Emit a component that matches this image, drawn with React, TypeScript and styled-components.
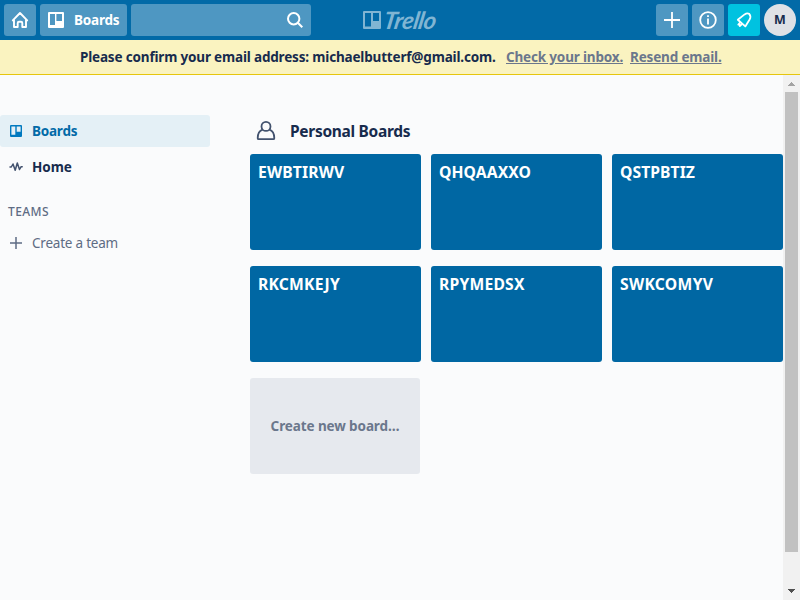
import React from "react";
import styled, { createGlobalStyle } from "styled-components";

const GlobalStyle = createGlobalStyle`
  *, *::before, *::after { box-sizing: border-box; }
  body { margin: 0; font-family: "Noto Sans", "Open Sans", sans-serif; font-size: 13.5px; line-height: 20px; color: #172b4d; background: #fafbfc; overflow: hidden; }
  button { font: inherit; border: 0; padding: 0; }
  svg { display: block; flex: none; }
`;

const Page = styled.div`
  display: flex;
  flex-direction: column;
  width: 800px;
  height: 600px;
  overflow: hidden;
`;

const Header = styled.header`
  display: grid;
  grid-template-columns: 1fr auto 1fr;
  align-items: center;
  height: 40px;
  flex: none;
  padding: 0 4px;
  background: #026aa7;
`;

const HeaderGroup = styled.div<{ $end?: boolean }>`
  display: flex;
  gap: 4px;
  justify-content: ${(p) => (p.$end ? "flex-end" : "flex-start")};
`;

const HeaderButton = styled.button<{ $accent?: boolean }>`
  display: flex;
  align-items: center;
  justify-content: center;
  width: 32px;
  height: 32px;
  border-radius: 3px;
  color: #fff;
  background: ${(p) => (p.$accent ? "#00c2e0" : "#4e97c2")};
`;

const BoardsButton = styled(HeaderButton)`
  width: 87px;
  justify-content: flex-start;
  padding-left: 8px;
  gap: 10px;
  font-weight: 700;
  letter-spacing: -0.2px;
`;

const SearchBox = styled.div`
  display: flex;
  align-items: center;
  justify-content: flex-end;
  width: 180px;
  height: 32px;
  padding-right: 7px;
  border-radius: 3px;
  background: #4e97c2;
`;

const Avatar = styled.div`
  display: flex;
  align-items: center;
  justify-content: center;
  width: 32px;
  height: 32px;
  border-radius: 50%;
  background: #dfe1e6;
  font-size: 12.5px;
  font-weight: 700;
`;

const Logo = styled.div`
  display: flex;
  align-items: center;
  gap: 3px;
  width: 74px;
  color: #80b5d3;
`;

const Wordmark = styled.span`
  font: italic 700 24px/24px Lato, sans-serif;
  letter-spacing: -0.5px;
  transform: skewX(-10deg);
`;

const Banner = styled.div`
  display: flex;
  justify-content: center;
  height: 35px;
  flex: none;
  padding-top: 7px;
  border-bottom: 1px solid #e6c60d;
  background: #faf3c0;
  font-weight: 700;
  letter-spacing: -0.17px;
  white-space: nowrap;
`;

const Message = styled.span`
  width: 426px;
`;

const BannerLink = styled.a<{ $width: number }>`
  width: ${(p) => p.$width}px;
  color: #6b778c;
  text-decoration: underline;
`;

const Body = styled.div`
  display: flex;
  flex: 1;
  min-height: 0;
`;

const Sidebar = styled.nav`
  width: 210px;
  flex: none;
  padding-top: 40px;
`;

const NavItem = styled.div<{ $active?: boolean; $light?: boolean }>`
  display: flex;
  align-items: center;
  gap: 8px;
  height: 32px;
  margin-bottom: 4px;
  padding-left: 8px;
  border-radius: 3px;
  font-weight: ${(p) => (p.$light ? 400 : 700)};
  letter-spacing: ${(p) => (p.$active || p.$light ? -0.22 : -0.05)}px;
  color: ${(p) => (p.$active ? "#026aa7" : p.$light ? "#5e6c84" : "#172b4d")};
  background: ${(p) => (p.$active ? "#e4f0f6" : "transparent")};
`;

const SectionLabel = styled.div`
  height: 28px;
  margin-top: 16px;
  padding: 3px 8px 0;
  font-size: 12px;
  font-weight: 500;
  letter-spacing: 0.4px;
  color: #5e6c84;
`;

const Main = styled.main`
  width: 533px;
  flex: none;
  margin-left: 40px;
  padding-top: 40px;
`;

const Heading = styled.h3`
  display: flex;
  align-items: center;
  gap: 8px;
  height: 32px;
  margin: 0 0 7px;
  font-size: 15.5px;
  font-weight: 700;
  letter-spacing: -0.3px;
`;

const Grid = styled.div`
  display: grid;
  grid-template-columns: repeat(3, 171px);
  gap: 16px 10px;
`;

const Tile = styled.div`
  height: 96px;
  padding: 8px;
  border-radius: 3px;
  background: #0067a3;
  color: #fff;
  font-size: 15.7px;
  font-weight: 700;
`;

const TileName = styled.span<{ $spacing: number }>`
  letter-spacing: ${(p) => p.$spacing}px;
`;

const NewTile = styled(Tile)`
  display: flex;
  align-items: center;
  justify-content: center;
  width: 170px;
  font-size: 13.5px;
  letter-spacing: -0.1px;
  color: #6b778c;
  background: #e6e9ee;
`;

const Scrollbar = styled.div`
  display: flex;
  flex-direction: column;
  align-items: center;
  width: 17px;
  background: #f1f1f1;
`;

const ScrollArrow = styled.div<{ $down?: boolean }>`
  display: flex;
  align-items: center;
  justify-content: center;
  width: 17px;
  height: 17px;
  margin-top: ${(p) => (p.$down ? "auto" : 0)};
  padding-bottom: ${(p) => (p.$down ? 1 : 0)}px;
  color: ${(p) => (p.$down ? "#505050" : "#a3a3a3")};
`;

const Thumb = styled.div`
  width: 13px;
  height: 460px;
  background: #c1c1c1;
`;

const BoardIcon = () => (
  <svg width="16" height="16" viewBox="0 0 16 16">
    <path fill="currentColor" fillRule="evenodd" d="M1 0h14a1 1 0 0 1 1 1v14a1 1 0 0 1-1 1H1a1 1 0 0 1-1-1V1a1 1 0 0 1 1-1ZM2 2v11h5V2Zm6.400 0v7H14V2Z" />
  </svg>
);

const LogoIcon = () => (
  <svg width="18" height="18" viewBox="0 0 18 18">
    <path fill="currentColor" fillRule="evenodd" d="M1 0h16a1 1 0 0 1 1 1v16a1 1 0 0 1-1 1H1a1 1 0 0 1-1-1V1a1 1 0 0 1 1-1ZM2 2v13.500h6V2Zm8 0v8h6V2Z" />
  </svg>
);

const HomeIcon = () => (
  <svg width="18" height="18" viewBox="0 0 18 18" fill="none" stroke="currentColor" strokeWidth="1.9" strokeLinejoin="round" strokeLinecap="round">
    <path d="m1.800 9.400 7.200-7.400 7.200 7.400M3 8.600V16h3.700v-4a1.300 1.300 0 0 1 1.300-1.300h2a1.300 1.300 0 0 1 1.300 1.300v4H15V8.600" />
  </svg>
);

const SearchIcon = () => (
  <svg width="18" height="18" viewBox="0 0 18 18" fill="none" stroke="#fff" strokeWidth="2">
    <circle cx="7.700" cy="7.700" r="5.700" /><path d="m11.800 11.800 4.500 4.500" />
  </svg>
);

const PlusIcon = () => (
  <svg width="16" height="16" viewBox="0 0 16 16" stroke="currentColor" strokeWidth="1.8">
    <path d="M8 0v16M0 8h16" />
  </svg>
);

const InfoIcon = () => (
  <svg width="18" height="18" viewBox="0 0 18 18" fill="none" stroke="currentColor">
    <circle cx="9" cy="9" r="7.800" strokeWidth="1.8" /><path d="M9 7.500v6M9 4.300v1.800" strokeWidth="1.8" />
  </svg>
);

const RocketIcon = () => (
  <svg width="18" height="18" viewBox="0 0 18 18" fill="none" stroke="currentColor" strokeWidth="1.8" strokeLinejoin="round">
    <path d="M2.800 8.800 9.600 3.400c1.500-1 3.200-1.200 4.600-.6 1.400 1.600 1.500 3.800.4 5.700L10.300 15.400Z" />
    <path d="m5.300 11.300-2 2.200 1.300.2.200 1.500 2.200-2" />
  </svg>
);

const PulseIcon = () => (
  <svg width="16" height="16" viewBox="0 0 16 16" fill="none" stroke="#42526e" strokeWidth="1.5" strokeLinejoin="round" strokeLinecap="round">
    <path d="M2 8h1.300L5 5l2.200 6.300L9.300 4l2.200 6.500L13 7.800h1.200" />
  </svg>
);

const PersonIcon = () => (
  <svg width="32" height="32" viewBox="0 0 32 32" fill="none" stroke="#42526e" strokeWidth="1.8">
    <circle cx="16" cy="11.400" r="4.500" />
    <path d="M12.700 14.600C9.500 15.600 7.700 18.700 7.700 23.200c0 .6.4 1 1 1h14.600c.6 0 1-.4 1-1 0-4.500-1.800-7.600-5-8.600" />
  </svg>
);

const ArrowIcon = ({ down }: { down?: boolean }) => (
  <svg width="7" height="4" viewBox="0 0 7 4" fill="currentColor" shapeRendering="crispEdges">
    <path d={down ? "M0 0h7v1H6v1H5v1H4v1H3V3H2V2H1V1H0Z" : "M3 0h1v1h1v1h1v1h1v1H0V3h1V2h1V1h1Z"} />
  </svg>
);

const boards = [
  { name: "EWBTIRWV", spacing: 0.15 },
  { name: "QHQAAXXO", spacing: 0.1 },
  { name: "QSTPBTIZ", spacing: 0.05 },
  { name: "RKCMKEJY", spacing: 0.2 },
  { name: "RPYMEDSX", spacing: 0.2 },
  { name: "SWKCOMYV", spacing: 0.3 },
];

export default function App() {
  return (
    <Page>
      <GlobalStyle />
      <Header>
        <HeaderGroup>
          <HeaderButton aria-label="Home"><HomeIcon /></HeaderButton>
          <BoardsButton><BoardIcon />Boards</BoardsButton>
          <SearchBox><SearchIcon /></SearchBox>
        </HeaderGroup>
        <Logo><LogoIcon /><Wordmark>Trello</Wordmark></Logo>
        <HeaderGroup $end>
          <HeaderButton aria-label="Create"><PlusIcon /></HeaderButton>
          <HeaderButton aria-label="Information"><InfoIcon /></HeaderButton>
          <HeaderButton $accent aria-label="Updates"><RocketIcon /></HeaderButton>
          <Avatar>M</Avatar>
        </HeaderGroup>
      </Header>
      <Banner>
        <Message>Please confirm your email address: michaelbutterf@gmail.com.</Message>
        <BannerLink $width={124}>Check your inbox.</BannerLink>
        <BannerLink $width={90}>Resend email.</BannerLink>
      </Banner>
      <Body>
        <Sidebar>
          <NavItem $active>
            <svg width="16" height="16" viewBox="0 0 16 16"><path fill="#0079bf" fillRule="evenodd" d="M3 2h10a1 1 0 0 1 1 1v10a1 1 0 0 1-1 1H3a1 1 0 0 1-1-1V3a1 1 0 0 1 1-1Zm.4 1.400v8.400h3.900V3.400Zm5.300 0v5.400h3.900V3.400Z" /></svg>
            Boards
          </NavItem>
          <NavItem><PulseIcon />Home</NavItem>
          <SectionLabel>TEAMS</SectionLabel>
          <NavItem $light>
            <svg width="16" height="16" viewBox="0 0 16 16" stroke="#5e6c84" strokeWidth="1.5"><path d="M8 2v12M2 8h12" /></svg>
            Create a team
          </NavItem>
        </Sidebar>
        <Main>
          <Heading><PersonIcon />Personal Boards</Heading>
          <Grid>
            {boards.map((b) => (
              <Tile key={b.name}><TileName $spacing={b.spacing}>{b.name}</TileName></Tile>
            ))}
            <NewTile>Create new board…</NewTile>
          </Grid>
        </Main>
        <Scrollbar>
          <ScrollArrow><ArrowIcon /></ScrollArrow>
          <Thumb />
          <ScrollArrow $down><ArrowIcon down /></ScrollArrow>
        </Scrollbar>
      </Body>
    </Page>
  );
}
